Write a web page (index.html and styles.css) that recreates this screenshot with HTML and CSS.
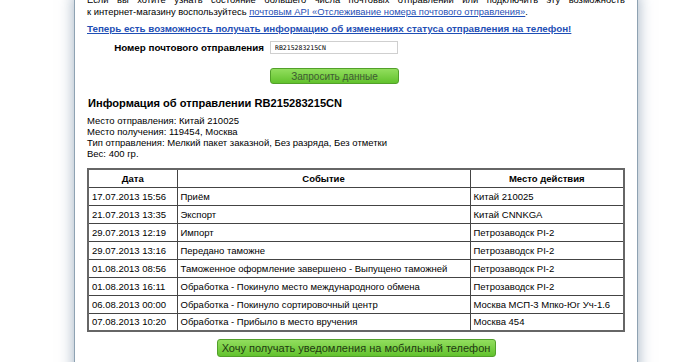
FILE: index.html
```html
<!DOCTYPE html>
<html lang="ru">
<head>
  <meta charset="UTF-8" />
  <title>Отслеживание почтовых отправлений</title>
  <link rel="stylesheet" href="styles.css">
</head>
<body>
  <div class="panel">
    <p class="intro"><span class="intro-first">Если вы хотите узнать состояние большего числа почтовых отправлений или подключить эту возможность</span> к интернет-магазину воспользуйтесь <a href="#">почтовым API «Отслеживание номера почтового отправления»</a>.</p>
    <p class="sms"><a href="#">Теперь есть возможность получать информацию об изменениях статуса отправления на телефон!</a></p>

    <form class="track">
      <label for="barcode">Номер почтового отправления</label>
      <input type="text" id="barcode" name="barcode" value="RB215283215CN" />
      <button type="button" class="btn btn-small">Запросить данные</button>
    </form>

    <h3>Информация об отправлении RB215283215CN</h3>
    <div class="info">
      Место отправления: Китай 210025<br />
      Место получения: 119454, Москва<br />
      Тип отправления: Мелкий пакет заказной, Без разряда, Без отметки<br />
      Вес: 400 гр.
    </div>

    <table class="history">
      <tr>
        <th class="col-date">Дата</th>
        <th>Событие</th>
        <th class="col-place">Место действия</th>
      </tr>
      <tr><td>17.07.2013 15:56</td><td>Приём</td><td>Китай 210025</td></tr>
      <tr><td>21.07.2013 13:35</td><td>Экспорт</td><td>Китай CNNKGA</td></tr>
      <tr><td>29.07.2013 12:19</td><td>Импорт</td><td>Петрозаводск PI-2</td></tr>
      <tr><td>29.07.2013 13:16</td><td>Передано таможне</td><td>Петрозаводск PI-2</td></tr>
      <tr><td>01.08.2013 08:56</td><td>Таможенное оформление завершено - Выпущено таможней</td><td>Петрозаводск PI-2</td></tr>
      <tr><td>01.08.2013 16:11</td><td>Обработка - Покинуло место международного обмена</td><td>Петрозаводск PI-2</td></tr>
      <tr><td>06.08.2013 00:00</td><td>Обработка - Покинуло сортировочный центр</td><td>Москва МСП-3 Мпко-Юг Уч-1.6</td></tr>
      <tr><td>07.08.2013 10:20</td><td>Обработка - Прибыло в место вручения</td><td>Москва 454</td></tr>
    </table>

    <div class="subscribe">
      <button type="button" class="btn btn-big">Хочу получать уведомления на мобильный телефон</button>
    </div>
  </div>
</body>
</html>
```

FILE: styles.css
```css
body {
  margin: 0;
  background-color: #fff;
  font-family: "Liberation Sans", Arial, sans-serif;
  font-size: 9.5px;
  color: #000;
  overflow: hidden;
}
.panel {
  width: 538px;
  margin: -6px 0 0 74px;
  padding: 0 12px 20px 12px;
  background-color: #fff;
  border-left: 1px solid #8ea2b2;
  border-right: 1px solid #8ea2b2;
  box-shadow: 0 0 14px rgba(80, 110, 140, 0.55);
}
a {
  color: #1f4fb5;
}
.intro {
  margin: 0;
  font-size: 9.4px;
  line-height: 12px;
  text-align: justify;
}
.intro-first {
  display: block;
  text-align-last: justify;
}
.sms {
  margin: 5px 0 0 0;
  font-size: 9.8px;
  line-height: 12px;
  font-weight: bold;
}
.track {
  display: grid;
  grid-template-columns: 177px 128px;
  column-gap: 6px;
  row-gap: 14px;
  align-items: center;
  margin-top: 6px;
}
.track label {
  text-align: right;
  font-size: 9.8px;
  font-weight: bold;
}
.track input {
  box-sizing: border-box;
  width: 128px;
  height: 13px;
  padding: 0 4px;
  border: 1px solid #cfcfcf;
  font-family: "DejaVu Sans Mono", monospace;
  font-size: 6.5px;
}
.btn {
  border: 1px solid #52a02a;
  border-radius: 3px;
  background: linear-gradient(#92de5e, #62c22d);
  font-family: "Liberation Sans", Arial, sans-serif;
  white-space: nowrap;
  cursor: pointer;
}
.btn-small {
  grid-column: 2;
  width: 129px;
  height: 16px;
  padding: 0;
  font-size: 10px;
  color: #3e5a33;
}
h3 {
  margin: 12px 0 5px 1px;
  font-size: 11.1px;
  line-height: 14px;
}
.info {
  line-height: 11px;
}
.history {
  width: 100%;
  margin-top: 9px;
  table-layout: fixed;
  border-collapse: collapse;
  border: 2px solid #666;
}
.history tr {
  height: 18px;
}
.history th,
.history td {
  box-sizing: border-box;
  padding: 0 3px;
  border: 1px solid #444;
  text-align: left;
  white-space: nowrap;
  overflow: hidden;
}
.history th {
  font-size: 9.5px;
  text-align: center;
}
.col-date {
  width: 89px;
}
.col-place {
  width: 154px;
}
.subscribe {
  margin-top: 7px;
  text-align: center;
}
.btn-big {
  height: 18px;
  width: 279px;
  padding: 0;
  font-size: 11px;
  color: #1f3a12;
}
```
